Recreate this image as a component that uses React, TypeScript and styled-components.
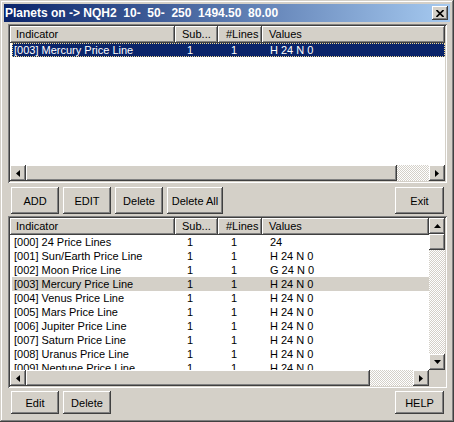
import React from "react";
import styled, { createGlobalStyle, css } from "styled-components";

const GlobalStyle = createGlobalStyle`
  html, body { margin: 0; padding: 0; background: #d4d0c8; }
  body { font-family: "Liberation Sans", Arial, sans-serif; font-size: 11px; color: #000; }
  * { box-sizing: border-box; }
`;

const raised = css`
  box-shadow: inset -1px -1px #404040, inset 1px 1px #ffffff,
    inset -2px -2px #808080, inset 2px 2px #d4d0c8;
`;

const Window = styled.div`
  width: 454px;
  height: 422px;
  background: #d4d0c8;
  padding: 4px;
  display: flex;
  flex-direction: column;
  box-shadow: inset -1px -1px #404040, inset 1px 1px #d4d0c8,
    inset -2px -2px #808080, inset 2px 2px #ffffff;
`;

const TitleBar = styled.div`
  height: 18px;
  margin-bottom: 2px;
  display: flex;
  align-items: center;
  justify-content: space-between;
  padding: 0 2px 0 1px;
  background: linear-gradient(to right, #0a246a, #a6caf0);
  color: #fff;
`;

const TitleText = styled.span`
  font-family: "Liberation Sans", Arial, sans-serif;
  font-weight: bold;
  font-size: 12px;
  white-space: pre;
`;

const CloseButton = styled.div`
  width: 16px;
  height: 14px;
  background: #d4d0c8;
  display: flex;
  align-items: center;
  justify-content: center;
  ${raised}
`;

const Content = styled.div`
  flex: 1;
  display: flex;
  flex-direction: column;
  padding: 0 3px 0 4px;
`;

const ListView = styled.div<{ $h: number }>`
  height: ${(p) => p.$h}px;
  background: #fff;
  padding: 2px;
  display: flex;
  flex-direction: column;
  box-shadow: inset 1px 1px #808080, inset -1px -1px #ffffff,
    inset 2px 2px #404040, inset -2px -2px #d4d0c8;
`;

const ListMain = styled.div`
  flex: 1;
  display: flex;
  min-height: 0;
`;

const ListBody = styled.div`
  flex: 1;
  min-width: 0;
  overflow: hidden;
  display: flex;
  flex-direction: column;
`;

const HeaderRow = styled.div`
  display: flex;
  height: 17px;
  flex-shrink: 0;
`;

const HeaderCell = styled.div<{ $w?: number; $pad: number }>`
  ${(p) => (p.$w ? `width: ${p.$w}px; flex-shrink: 0;` : "flex: 1;")}
  background: #d4d0c8;
  padding-left: ${(p) => p.$pad}px;
  line-height: 17px;
  white-space: nowrap;
  overflow: hidden;
  box-shadow: inset -1px -1px #404040, inset 1px 1px #ffffff,
    inset -2px -2px #808080;
`;

const Row = styled.div<{ $mode?: "selected" | "hot" }>`
  display: flex;
  height: 14px;
  flex-shrink: 0;
  margin-left: 2px;
  line-height: 14px;
  white-space: nowrap;
  ${(p) =>
    p.$mode === "selected" &&
    css`
      background: #0a246a;
      color: #fff;
      outline: 1px dotted #f0d890;
      outline-offset: -1px;
    `}
  ${(p) =>
    p.$mode === "hot" &&
    css`
      background: #d4d0c8;
    `}
`;

const Cell = styled.div<{ $w?: number; $pad: number }>`
  ${(p) => (p.$w ? `width: ${p.$w}px; flex-shrink: 0;` : "flex: 1;")}
  padding-left: ${(p) => p.$pad}px;
  overflow: hidden;
`;

const HScroll = styled.div`
  height: 16px;
  display: flex;
  flex-shrink: 0;
`;

const VScroll = styled.div`
  width: 16px;
  display: flex;
  flex-direction: column;
  flex-shrink: 0;
`;

const ArrowBtn = styled.div`
  width: 16px;
  height: 16px;
  flex-shrink: 0;
  background: #d4d0c8;
  display: flex;
  align-items: center;
  justify-content: center;
  ${raised}
`;

const Thumb = styled.div<{ $size: number; $vertical?: boolean }>`
  ${(p) => (p.$vertical ? `height: ${p.$size}px;` : `width: ${p.$size}px;`)}
  flex-shrink: 0;
  background: #d4d0c8;
  ${raised}
`;

const Track = styled.div`
  flex: 1;
  background-color: #d4d0c8;
  background-image: conic-gradient(#ffffff 25%, #d4d0c8 0 50%, #ffffff 0 75%, #d4d0c8 0);
  background-size: 2px 2px;
`;

const Corner = styled.div`
  width: 16px;
  height: 16px;
  background: #d4d0c8;
`;

const ButtonRow = styled.div<{ $h: number; $mt: number; $mb: number }>`
  height: ${(p) => p.$h}px;
  margin-top: ${(p) => p.$mt}px;
  margin-bottom: ${(p) => p.$mb}px;
  display: flex;
  gap: 4px;
  padding: 0 3px;
  flex-shrink: 0;
`;

const Button = styled.div<{ $w: number }>`
  width: ${(p) => p.$w}px;
  height: 100%;
  background: #d4d0c8;
  display: flex;
  align-items: center;
  justify-content: center;
  font-size: 11px;
  ${raised}
`;

const Spacer = styled.div`
  flex: 1;
`;

type Dir = "left" | "right" | "up" | "down";

const Arrow: React.FC<{ dir: Dir }> = ({ dir }) => {
  const pts: Record<Dir, string> = {
    left: "4,0 0,3.5 4,7",
    right: "0,0 4,3.5 0,7",
    up: "0,4 3.5,0 7,4",
    down: "0,0 7,0 3.5,4",
  };
  const horiz = dir === "left" || dir === "right";
  const w = horiz ? 4 : 7;
  const h = horiz ? 7 : 4;
  return (
    <svg width={w} height={h} viewBox={`0 0 ${w} ${h}`} style={{ display: "block" }}>
      <polygon points={pts[dir]} fill="#000" />
    </svg>
  );
};

const ScrollH: React.FC<{ thumb: number }> = ({ thumb }) => (
  <>
    <ArrowBtn>
      <Arrow dir="left" />
    </ArrowBtn>
    <Thumb $size={thumb} />
    <Track />
    <ArrowBtn>
      <Arrow dir="right" />
    </ArrowBtn>
  </>
);

type Col = { title: string; w?: number; headPad: number; cellPad: number };

const columns: Col[] = [
  { title: "Indicator", w: 165, headPad: 6, cellPad: 2 },
  { title: "Sub...", w: 43, headPad: 7, cellPad: 12 },
  { title: "#Lines", w: 44, headPad: 8, cellPad: 13 },
  { title: "Values", headPad: 7, cellPad: 8 },
];

type Item = { name: string; sub: string; lines: string; values: string; mode?: "selected" | "hot" };

const topItems: Item[] = [
  { name: "[003] Mercury Price Line", sub: "1", lines: "1", values: "H 24 N 0", mode: "selected" },
];

const bottomItems: Item[] = [
  { name: "[000] 24 Price Lines", sub: "1", lines: "1", values: "24" },
  { name: "[001] Sun/Earth Price Line", sub: "1", lines: "1", values: "H 24 N 0" },
  { name: "[002] Moon Price Line", sub: "1", lines: "1", values: "G 24 N 0" },
  { name: "[003] Mercury Price Line", sub: "1", lines: "1", values: "H 24 N 0", mode: "hot" },
  { name: "[004] Venus Price Line", sub: "1", lines: "1", values: "H 24 N 0" },
  { name: "[005] Mars Price Line", sub: "1", lines: "1", values: "H 24 N 0" },
  { name: "[006] Jupiter Price Line", sub: "1", lines: "1", values: "H 24 N 0" },
  { name: "[007] Saturn Price Line", sub: "1", lines: "1", values: "H 24 N 0" },
  { name: "[008] Uranus Price Line", sub: "1", lines: "1", values: "H 24 N 0" },
  { name: "[009] Neptune Price Line", sub: "1", lines: "1", values: "H 24 N 0" },
];

const Table: React.FC<{ items: Item[] }> = ({ items }) => (
  <ListBody>
    <HeaderRow>
      {columns.map((c) => (
        <HeaderCell key={c.title} $w={c.w} $pad={c.headPad}>
          {c.title}
        </HeaderCell>
      ))}
    </HeaderRow>
    {items.map((it) => {
      const vals = [it.name, it.sub, it.lines, it.values];
      return (
        <Row key={it.name} $mode={it.mode}>
          {columns.map((c, i) => (
            <Cell key={c.title} $w={i === 0 && c.w ? c.w - 2 : c.w} $pad={c.cellPad}>
              {vals[i]}
            </Cell>
          ))}
        </Row>
      );
    })}
  </ListBody>
);

export default function App() {
  return (
    <>
      <GlobalStyle />
      <Window>
        <TitleBar>
          <TitleText>{"Planets on -> NQH2  10-  50-  250  1494.50  80.00"}</TitleText>
          <CloseButton>
            <svg width="8" height="7" viewBox="0 0 8 7" style={{ display: "block" }}>
              <path d="M0.5 0 L7.5 7 M7.5 0 L0.5 7" stroke="#000" strokeWidth="1.6" />
            </svg>
          </CloseButton>
        </TitleBar>
        <Content>
          <ListView $h={159}>
            <ListMain>
              <Table items={topItems} />
            </ListMain>
            <HScroll>
              <ScrollH thumb={371} />
            </HScroll>
          </ListView>
          <ButtonRow $h={27} $mt={4} $mb={2}>
            <Button $w={48}>ADD</Button>
            <Button $w={48}>EDIT</Button>
            <Button $w={48}>Delete</Button>
            <Button $w={56}>Delete All</Button>
            <Spacer />
            <Button $w={49}>Exit</Button>
          </ButtonRow>
          <ListView $h={172}>
            <ListMain>
              <Table items={bottomItems} />
              <VScroll>
                <ArrowBtn>
                  <Arrow dir="up" />
                </ArrowBtn>
                <Thumb $size={16} $vertical />
                <Track />
                <ArrowBtn>
                  <Arrow dir="down" />
                </ArrowBtn>
              </VScroll>
            </ListMain>
            <HScroll>
              <ScrollH thumb={344} />
              <Corner />
            </HScroll>
          </ListView>
          <ButtonRow $h={23} $mt={3} $mb={0}>
            <Button $w={48}>Edit</Button>
            <Button $w={48}>Delete</Button>
            <Spacer />
            <Button $w={49}>HELP</Button>
          </ButtonRow>
        </Content>
      </Window>
    </>
  );
}
